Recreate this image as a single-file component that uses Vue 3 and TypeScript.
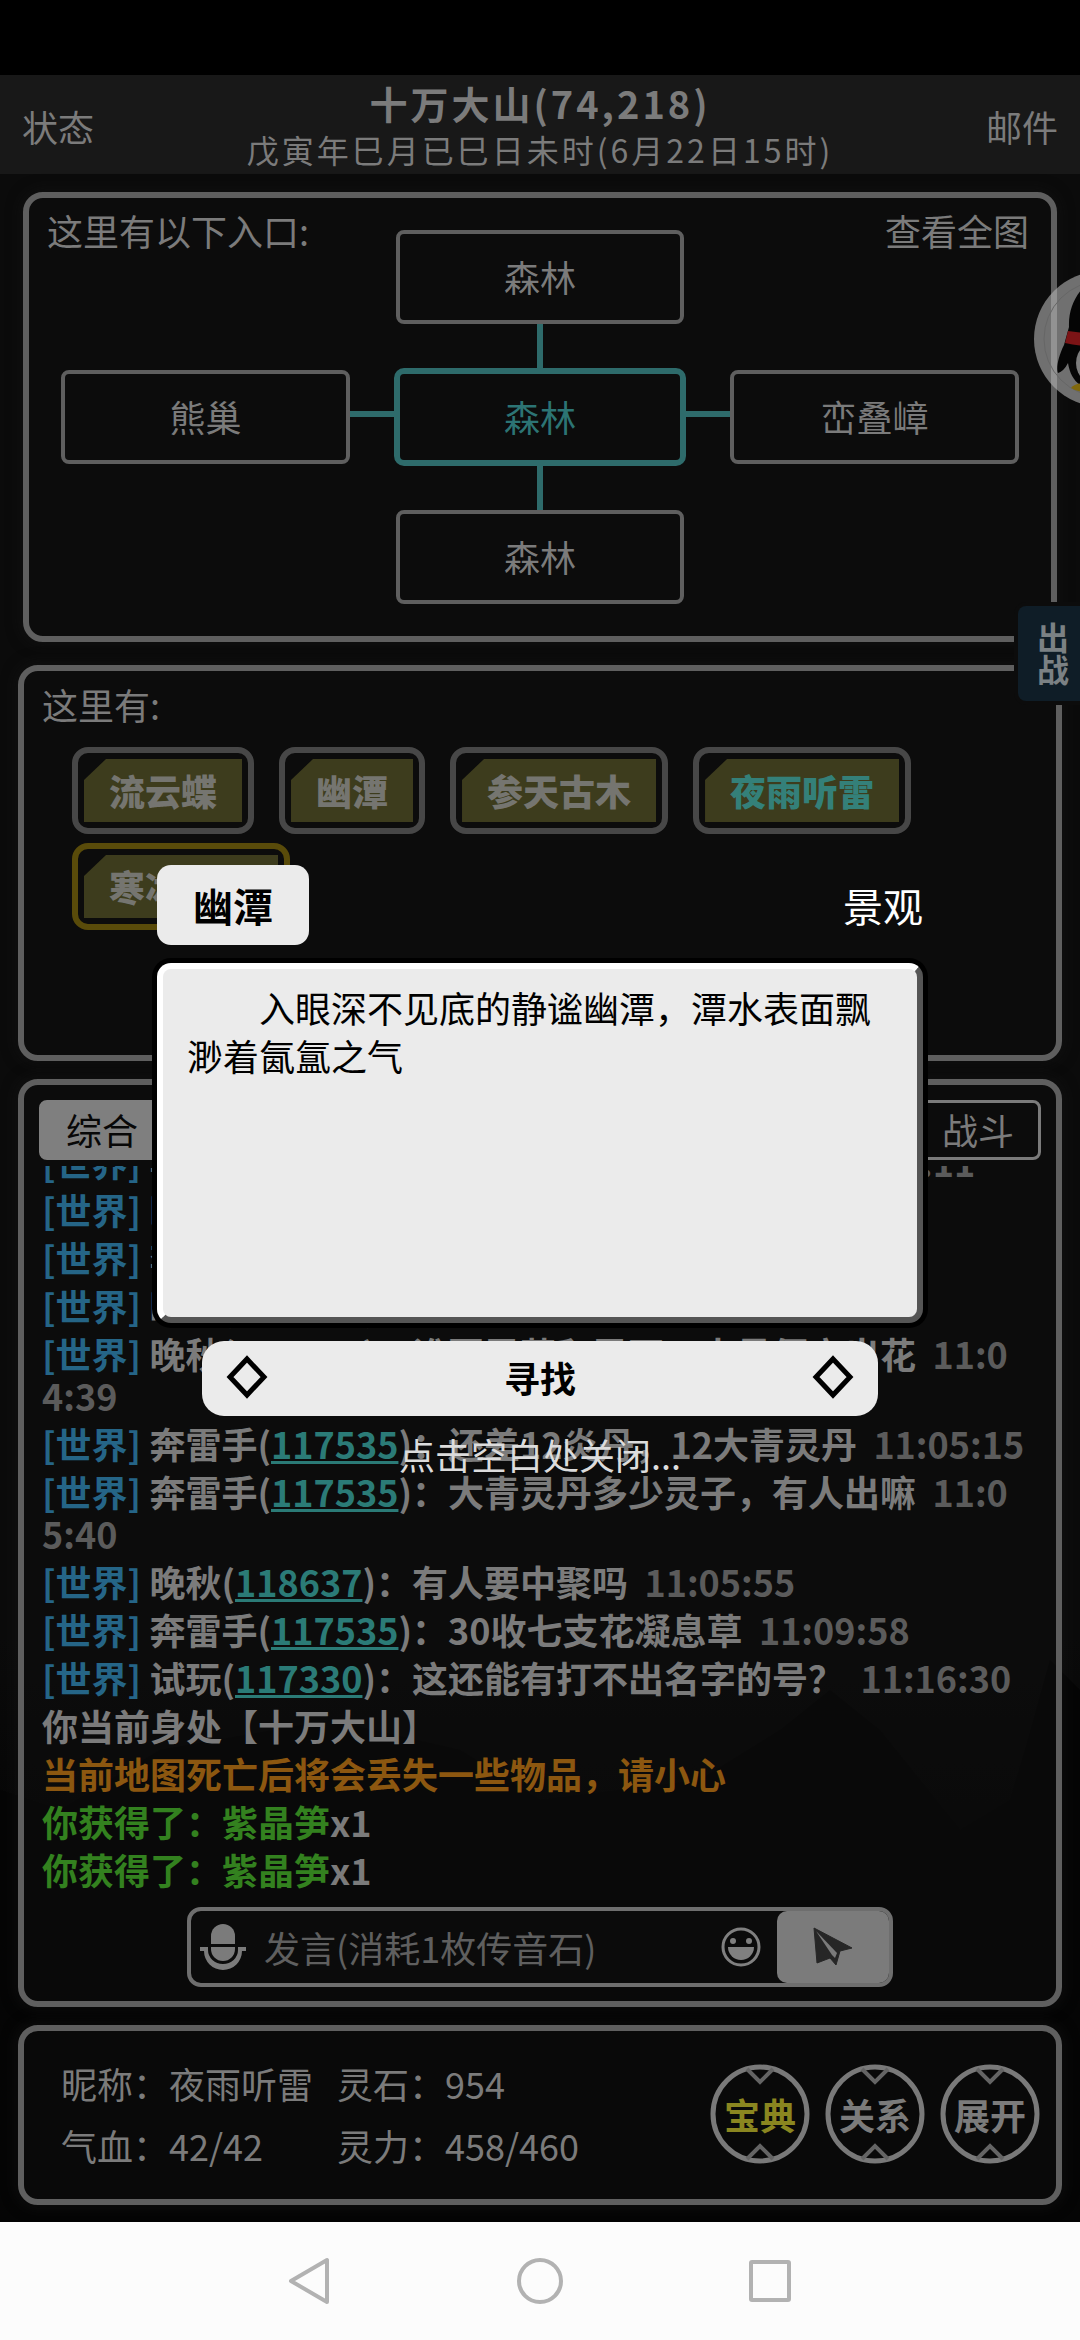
<script setup lang="ts">
interface Entity {
  name: string
  player?: boolean
  selected?: boolean
}

interface ChatMessage {
  sender: string
  id: string
  text: string
  time: string
}

interface Stat {
  label: string
  value: string
}

const entities: Entity[] = [
  { name: '流云蝶' },
  { name: '幽潭' },
  { name: '参天古木' },
  { name: '夜雨听雷', player: true },
  { name: '寒冰灵草', selected: true },
]

const messages: ChatMessage[] = [
  { sender: '奔雷手', id: '117535', text: '还有没有人要中聚丹的', time: '10:59:11' },
  { sender: '晚秋', id: '118637', text: '收凝息草', time: '11:01:12' },
  { sender: '奔雷手', id: '117535', text: '来个七支花', time: '11:01:20' },
  { sender: '晚秋', id: '118637', text: '有人要大青灵丹吗', time: '11:04:30' },
  { sender: '晚秋', id: '118637', text: '谁要灵草和灵石，大量便宜出花', time: '11:04:39' },
  { sender: '奔雷手', id: '117535', text: '还差12炎丹，12大青灵丹', time: '11:05:15' },
  { sender: '奔雷手', id: '117535', text: '大青灵丹多少灵子，有人出嘛', time: '11:05:40' },
  { sender: '晚秋', id: '118637', text: '有人要中聚吗', time: '11:05:55' },
  { sender: '奔雷手', id: '117535', text: '30收七支花凝息草', time: '11:09:58' },
  { sender: '试玩', id: '117330', text: '这还能有打不出名字的号？', time: '11:16:30' },
]

const gains: string[] = ['紫晶笋', '紫晶笋']

const stats: Stat[] = [
  { label: '昵称：', value: '夜雨听雷' },
  { label: '灵石：', value: '954' },
  { label: '气血：', value: '42/42' },
  { label: '灵力：', value: '458/460' },
]

const actions: string[] = ['宝典', '关系', '展开']
</script>

<template>
  <div class="app">
    <svg class="scenery" viewBox="0 0 1080 620" preserveAspectRatio="none" aria-hidden="true">
      <path d="M0 190 L60 210 L160 150 L330 120 L460 150 L540 200 L700 180 L780 130 L830 90 L880 130 L960 230 L1010 200 L1025 150 L1050 60 L1080 90 V620 H0Z" fill="#050505" />
    </svg>

    <div class="status-space"></div>

    <header class="topbar">
      <button class="link" type="button">状态</button>
      <div class="place">
        <h1>十万大山(74,218)</h1>
        <p>戊寅年巳月已巳日未时(6月22日15时)</p>
      </div>
      <button class="link" type="button">邮件</button>
    </header>

    <main>
      <section class="panel map">
        <h2 class="map-label">这里有以下入口:</h2>
        <button class="node north" type="button">森林</button>
        <button class="link map-all" type="button">查看全图</button>
        <i class="vline upper"></i>
        <button class="node west" type="button">熊巢</button>
        <i class="hline left"></i>
        <button class="node here" type="button">森林</button>
        <i class="hline right"></i>
        <button class="node east" type="button">峦叠嶂</button>
        <i class="vline lower"></i>
        <button class="node south" type="button">森林</button>
      </section>

      <section class="panel present">
        <h2>这里有:</h2>
        <div class="chips">
          <button
            v-for="e in entities"
            :key="e.name"
            type="button"
            class="chip"
            :class="{ player: e.player, selected: e.selected }"
          >
            <span>{{ e.name }}</span>
          </button>
        </div>
      </section>

      <section class="panel chat">
        <nav class="tabs">
          <button class="tab active" type="button">综合</button>
          <button class="tab" type="button">战斗</button>
        </nav>
        <div class="log">
          <p v-for="m in messages" :key="m.time">
            <span class="world">[世界]</span>&nbsp;{{ m.sender }}(<a href="#">{{ m.id }}</a>)：{{ m.text }}<span class="time">&nbsp;&nbsp;{{ m.time }}</span>
          </p>
          <p>你当前身处【十万大山】</p>
          <p class="warn">当前地图死亡后将会丢失一些物品，请小心</p>
          <p v-for="(g, i) in gains" :key="i"><span class="gain">你获得了：{{ g }}</span>x1</p>
        </div>
        <form class="composer" @submit.prevent>
          <button class="icon" type="button" aria-label="语音">
            <svg width="46" height="46" viewBox="0 0 46 46">
              <path d="M11 20V12a12 12 0 0 1 24 0v8Z" fill="#7b7b7b" />
              <path d="M11 23h24v2a12 12 0 0 1-24 0Z" fill="#7b7b7b" />
              <path d="M0 23h8v3a15 14 0 0 0 30 0v-3h8v4h-4a19 19 0 0 1-38 0H0Z" fill="#7b7b7b" />
            </svg>
          </button>
          <input type="text" placeholder="发言(消耗1枚传音石)" aria-label="发言" />
          <button class="icon" type="button" aria-label="表情">
            <svg width="40" height="40" viewBox="0 0 40 40">
              <circle cx="20" cy="20" r="18" fill="none" stroke="#808080" stroke-width="3" />
              <circle cx="12" cy="14" r="3" fill="#808080" />
              <circle cx="28" cy="14" r="3" fill="#808080" />
              <path d="M7 20h26a13 13 0 0 1-26 0Z" fill="#808080" />
            </svg>
          </button>
          <button class="send" type="submit" aria-label="发送">
            <svg width="40" height="40" viewBox="0 0 40 40">
              <path d="M1 1 39 21 27 24 23 38 17 31 4 36Z" fill="#262626" stroke="#262626" stroke-width="1" stroke-linejoin="round" />
              <path d="M3 4 24 26 22 31 19 28Z" fill="#7b7b7b" />
            </svg>
          </button>
        </form>
      </section>

      <section class="panel profile">
        <dl>
          <div v-for="s in stats" :key="s.label">
            <dt>{{ s.label }}</dt>
            <dd>{{ s.value }}</dd>
          </div>
        </dl>
        <div class="rounds">
          <button v-for="(a, i) in actions" :key="a" type="button" class="round" :class="{ gold: i === 0 }">
            <svg viewBox="0 0 100 100" aria-hidden="true">
              <circle cx="50" cy="50" r="47" fill="none" stroke="#797979" stroke-width="5" />
              <path d="M37 5 50 18 63 5M37 95 50 82 63 95" fill="none" stroke="#646464" stroke-width="4" />
            </svg>
            <span>{{ a }}</span>
          </button>
        </div>
      </section>
    </main>

    <footer class="navbar">
      <button type="button" aria-label="返回">
        <svg width="48" height="48" viewBox="0 0 48 48">
          <path d="M41 3V45L5 24Z" />
        </svg>
      </button>
      <button type="button" aria-label="主页">
        <svg width="48" height="48" viewBox="0 0 48 48"><circle cx="24" cy="24" r="21" /></svg>
      </button>
      <button type="button" aria-label="最近">
        <svg width="48" height="48" viewBox="0 0 48 48"><rect x="5" y="5" width="38" height="38" rx="1" /></svg>
      </button>
    </footer>

    <button class="avatar" type="button" aria-label="QQ">
      <svg width="136" height="136" viewBox="0 0 136 136">
        <circle cx="68" cy="68" r="68" fill="#b4b4b4" fill-opacity="0.6" />
        <circle cx="68" cy="68" r="58" fill="none" stroke="#666" stroke-width="1" />
        <path d="M68 6C50 10 34 30 35 56L30 74C24 86 22 98 24 102Q30 100 34 92C36 104 41 112 50 116H86C95 112 100 104 102 92Q106 100 112 102C114 98 112 86 106 74L101 56C102 30 86 10 68 6Z" fill="#050505" />
        <ellipse cx="68" cy="92" rx="26" ry="24" fill="#7c7c7c" />
        <path d="M34 60Q68 65 102 60L105 72Q68 80 31 72Z" fill="#7c1416" />
        <path d="M37 117Q42 111 54 113L60 120Q46 123 37 117Z" fill="#80680c" />
      </svg>
    </button>
    <button class="battle" type="button">出战</button>

    <div class="overlay">
      <div class="dialog" role="dialog" aria-label="幽潭">
        <div class="dialog-head">
          <h2>幽潭</h2>
          <span>景观</span>
        </div>
        <div class="dialog-body">
          <p>入眼深不见底的静谧幽潭，潭水表面飘渺着氤氲之气</p>
        </div>
        <button class="search" type="button">
          <svg width="42" height="44" viewBox="0 0 42 44"><path d="M21 4 38 22 21 40 4 22Z" /></svg>
          寻找
          <svg width="42" height="44" viewBox="0 0 42 44"><path d="M21 4 38 22 21 40 4 22Z" /></svg>
        </button>
        <p class="hint">点击空白处关闭...</p>
      </div>
    </div>
  </div>
</template>

<style>
body {
  margin: 0;
  background: #000;
}
</style>

<style scoped>
.app {
  position: relative;
  overflow: hidden;
  display: flex;
  flex-direction: column;
  min-height: 100vh;
  color: #7b7b7b;
  background: linear-gradient(#0b0b0b 0, #0b0b0b 70%, #020202 86%, #020202 100%);
  font-family: 'Noto Sans CJK SC', sans-serif;
  font-size: 36px;
  line-height: 48px;
}

.app * {
  box-sizing: border-box;
}

h1,
h2,
p,
dl,
dd {
  margin: 0;
  font-size: inherit;
  font-weight: inherit;
}

button,
input {
  margin: 0;
  padding: 0;
  border: 0;
  background: none;
  color: inherit;
  font: inherit;
}

svg {
  display: block;
}

.scenery {
  position: absolute;
  left: 0;
  bottom: 120px;
  width: 100%;
  height: 620px;
}

.status-space {
  height: 75px;
  background: #000;
}

.topbar {
  display: flex;
  align-items: center;
  justify-content: space-between;
  padding: 5px 22px 2px;
  background: #181818;
}

.place {
  text-align: center;
  line-height: 46px;
}

.place h1 {
  font-size: 38px;
  font-weight: 700;
  letter-spacing: 3px;
}

.place p {
  font-size: 32px;
  letter-spacing: 3px;
}

main {
  position: relative;
  flex: 1;
  display: flex;
  flex-direction: column;
  gap: 18px;
  padding: 18px 18px 17px;
}

.panel {
  border: 6px solid #5f5f5f;
  border-radius: 20px;
  background: rgba(14, 14, 14, 0.5);
  box-shadow: 0 0 16px rgba(24, 24, 24, 0.6);
}

.map {
  display: grid;
  grid-template-columns: 1fr 46px 288px 46px 1fr;
  grid-template-rows: 118px 46px 94px 46px 94px;
  justify-items: stretch;
  align-items: stretch;
  margin: 0 5px 5px;
  padding: 8px 18px 32px;
}

.map-label {
  grid-area: 1 / 1;
  align-self: start;
  white-space: nowrap;
}

.map-all {
  grid-area: 1 / 5;
  justify-self: end;
  align-self: start;
  margin-right: 4px;
}

.node {
  padding-bottom: 2px;
  border: 4px solid #5f5f5f;
  border-radius: 8px;
}

.north {
  grid-area: 1 / 3;
  margin-top: 24px;
}

.west {
  grid-area: 3 / 1;
  margin-left: 14px;
}

.here {
  grid-area: 3 / 3;
  margin: -2px;
  border: 6px solid #2e6b6b;
  border-radius: 10px;
  color: #2c7474;
}

.east {
  grid-area: 3 / 5;
  margin-right: 14px;
}

.south {
  grid-area: 5 / 3;
}

.vline {
  justify-self: center;
  width: 6px;
  background: #2e6b6b;
}

.hline {
  align-self: center;
  height: 6px;
  margin-bottom: 6px;
  background: #2e6b6b;
}

.upper {
  grid-area: 2 / 3;
}

.lower {
  grid-area: 4 / 3;
}

.left {
  grid-area: 3 / 2;
}

.right {
  grid-area: 3 / 4;
}

.present {
  min-height: 396px;
  padding: 9px 18px;
}

.chips {
  display: flex;
  flex-wrap: wrap;
  gap: 9px 25px;
  padding: 19px 100px 0 30px;
}

.chip {
  padding: 6px;
  border: 6px solid #474747;
  border-radius: 16px;
  font-weight: 900;
  color: #757570;
}

.chip span {
  display: block;
  padding: 7px 25px 8px;
  background: #3d3c1d;
  clip-path: polygon(22px 0, 100% 0, 100% 100%, 0 100%, 0 21px);
}

.chip.player {
  color: #348079;
}

.chip.selected {
  border-color: #594b0a;
}

.chat {
  padding: 15px 15px 14px;
}

.tabs {
  display: flex;
  justify-content: space-between;
}

.tab {
  height: 60px;
  padding: 0 24px 2px;
  border: 3px solid #7b7b7b;
  border-radius: 8px;
}

.tab.active {
  background: #7f7f7f;
  border-color: #7f7f7f;
  color: #080808;
}

.log {
  display: flex;
  flex-direction: column;
  justify-content: flex-end;
  height: 732px;
  margin-top: 6px;
  padding: 0 6px 2px 3px;
  overflow: hidden;
  font-weight: 700;
  line-height: 42px;
  word-break: break-all;
}

.log p {
  flex: none;
  margin-bottom: 6px;
}

.world {
  color: #256587;
}

.log a {
  color: #2b7b77;
  text-decoration-thickness: 3px;
  text-underline-offset: 2px;
}

.time {
  color: #5b5b5b;
}

.log .warn {
  color: #8c5710;
}

.gain {
  color: #33811f;
}

.composer {
  display: flex;
  align-items: center;
  width: 706px;
  height: 80px;
  margin: 9px auto 0;
  border: 4px solid #6e6e6e;
  border-radius: 14px;
  background: #0b0b0b;
}

.composer input {
  flex: 1;
  min-width: 0;
  padding: 0 18px;
  outline: 0;
}

.composer input::placeholder {
  color: #5f5f5f;
  opacity: 1;
}

.icon {
  flex: none;
  margin-left: 9px;
}

.send {
  display: grid;
  place-items: center;
  flex: none;
  align-self: stretch;
  width: 112px;
  margin-left: 16px;
  border-radius: 10px;
  background: #7b7b7b;
}

.profile {
  display: flex;
  align-items: center;
  justify-content: space-between;
  min-height: 180px;
  padding: 0 16px 2px 37px;
}

dl {
  display: grid;
  grid-template-columns: auto auto;
  gap: 14px 24px;
}

dl div {
  display: flex;
}

.rounds {
  display: flex;
  gap: 15px;
}

.round {
  position: relative;
  width: 100px;
  height: 100px;
  font-weight: 700;
}

.round svg {
  position: absolute;
  inset: 0;
}

.round.gold {
  color: #8a8620;
}

.navbar {
  position: relative;
  display: flex;
  align-items: center;
  justify-content: center;
  gap: 182px;
  height: 118px;
  background: #fcfcfc;
}

.navbar svg {
  fill: none;
  stroke: #b2b2b2;
  stroke-width: 4;
  stroke-linejoin: round;
}

.avatar {
  position: absolute;
  top: 271px;
  right: -90px;
}

.battle {
  position: absolute;
  top: 606px;
  right: 0;
  width: 62px;
  height: 95px;
  padding-left: 8px;
  border-radius: 8px 0 0 8px;
  background: #0f1d27;
  box-shadow: 0 0 0 4px #0c0c0c;
  color: #7b8184;
  font-size: 32px;
  font-weight: 700;
  line-height: 54px;
  writing-mode: vertical-rl;
}

.overlay {
  position: absolute;
  inset: 0;
  display: grid;
  place-items: center;
  padding: 0 157px;
  color: #000;
}

.dialog {
  width: 100%;
}

.dialog-head {
  display: flex;
  align-items: center;
  justify-content: space-between;
  margin-bottom: 18px;
  font-size: 40px;
  line-height: 80px;
}

.dialog-head h2 {
  padding: 0 36px;
  border-radius: 14px;
  background: #ebebeb;
  font-weight: 700;
}

.dialog-head span {
  color: #fff;
}

.dialog-body {
  min-height: 360px;
  padding: 14px 24px;
  border: 6px solid;
  border-color: #fff #555 #555 #fff;
  border-radius: 14px;
  background: #ebebeb;
  box-shadow: 0 0 0 5px #000;
}

.dialog-body p {
  text-indent: 2em;
}

.search {
  display: flex;
  align-items: center;
  justify-content: space-between;
  width: 676px;
  height: 75px;
  margin: 18px auto 20px;
  padding: 0 24px 3px;
  border-radius: 22px;
  background: #ebebeb;
  color: #000;
  font-weight: 700;
}

.search svg {
  fill: none;
  stroke: #000;
  stroke-width: 5;
}

.hint {
  padding-bottom: 3px;
  color: #dcdcdc;
  line-height: 36px;
  text-align: center;
}
</style>
